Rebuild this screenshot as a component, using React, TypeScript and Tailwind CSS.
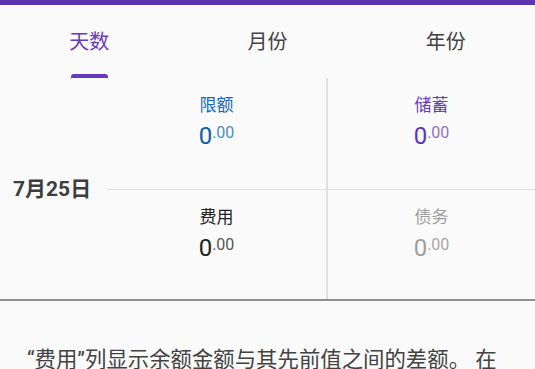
import React from "react";

const font = { fontFamily: 'Roboto, "Noto Sans CJK SC", sans-serif' };

function Cell({
  label,
  labelCls,
  intCls,
  decCls,
}: {
  label: string;
  labelCls: string;
  intCls: string;
  decCls: string;
}) {
  return (
    <div className="flex h-[111px] flex-col items-center pt-[16px]">
      <div className={`text-[17px] leading-[22px] ${labelCls}`}>{label}</div>
      <div className="mt-[6px] flex items-start leading-[28px]">
        <span className={`text-[24px] ${intCls}`}>0</span>
        <span className={`mt-[1px] text-[16px] leading-[20px] ${decCls}`}>.00</span>
      </div>
    </div>
  );
}

export default function App() {
  return (
    <div className="h-[369px] w-[535px] overflow-hidden bg-[#fafafa]" style={font}>
      <div className="h-[5px] bg-[#5e35b1]" />
      <div className="grid h-[73px] grid-cols-3">
        <div className="flex flex-col items-center">
          <div className="flex flex-1 items-center pt-[5px] text-[20px] text-[#673ab7]">天数</div>
          <div className="h-[4px] w-[37px] rounded-t-[3px] bg-[#673ab7]" />
        </div>
        <div className="flex items-center justify-center pb-[4px] pt-[5px] text-[20px] text-[#424242]">月份</div>
        <div className="flex items-center justify-center pb-[4px] pt-[5px] text-[20px] text-[#424242]">年份</div>
      </div>
      <div className="flex h-[223px] border-b-2 border-[#8e8e8e]">
        <div className="flex w-[107px] items-center pl-[13px] pt-[2px] text-[21px] font-bold text-[#3d3d3d]">
          7月25日
        </div>
        <div className="flex w-[221px] flex-col border-r-2 border-[#e0e0e0]">
          <div className="border-b border-[#e0e0e0]">
            <Cell label="限额" labelCls="text-[#1565c0]" intCls="text-[#0f5ca6]" decCls="text-[#4b8dc8]" />
          </div>
          <Cell label="费用" labelCls="text-[#212121]" intCls="text-[#212121]" decCls="text-[#555555]" />
        </div>
        <div className="flex flex-1 flex-col">
          <div className="border-b border-[#e0e0e0]">
            <Cell label="储蓄" labelCls="text-[#673ab7]" intCls="text-[#5e35b1]" decCls="text-[#8f70cc]" />
          </div>
          <Cell label="债务" labelCls="text-[#9e9e9e]" intCls="text-[#9e9e9e]" decCls="text-[#a8a8a8]" />
        </div>
      </div>
      <div className="whitespace-nowrap pl-[27px] pt-[45px] text-[21.4px] leading-[28px] text-[#424242]">
        “费用”列显示余额金额与其先前值之间的差额。 在
      </div>
    </div>
  );
}
